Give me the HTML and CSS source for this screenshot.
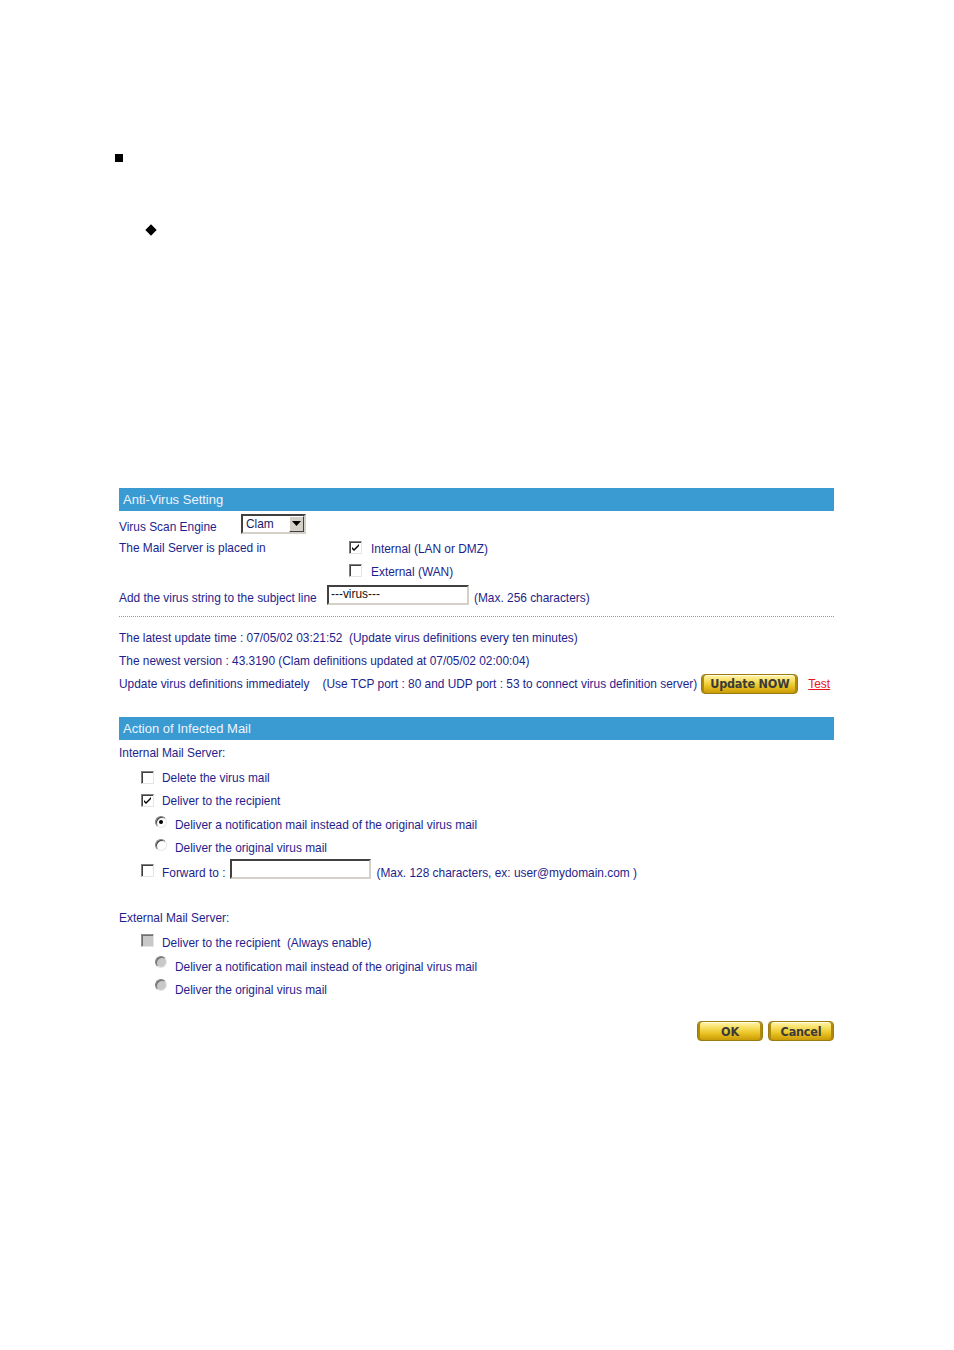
FILE: index.html
```html
<!DOCTYPE html>
<html>
<head>
<meta charset="utf-8">
<link rel="stylesheet" href="styles.css">
</head>
<body>
<div class="page">
  <div class="bullet-sq"></div>
  <div class="bullet-dm"></div>

  <div class="panel">
    <div class="bar">Anti-Virus Setting</div>

    <div class="row h25">
      <span class="lbl w122 dn">Virus Scan Engine</span>
      <span class="select"><span class="sel-val">Clam</span><span class="sel-btn"><svg width="9" height="5" viewBox="0 0 9 5"><path d="M0 0H9L4.5 5Z" fill="#000"/></svg></span></span>
    </div>
    <div class="row h23">
      <span class="lbl w230">The Mail Server is placed in</span>
      <span class="cb"><svg class="chk" width="9" height="9" viewBox="0 0 9 9"><path d="M1 4l2 2 5-5v2l-5 5-2-2z" fill="#000"/></svg></span>
      <span class="opt">Internal (LAN or DMZ)</span>
    </div>
    <div class="row h23">
      <span class="lbl w230"></span>
      <span class="cb"></span>
      <span class="opt">External (WAN)</span>
    </div>
    <div class="row h26">
      <span class="lbl w208 dn">Add the virus string to the subject line</span>
      <span class="input w142">---virus---</span>
      <span class="note dn">(Max. 256 characters)</span>
    </div>

    <div class="dots"></div>

    <div class="row h23 first-info">
      <span>The latest update time : 07/05/02 03:21:52&nbsp; (Update virus definitions every ten minutes)</span>
    </div>
    <div class="row h23">
      <span>The newest version : 43.3190 (Clam definitions updated at 07/05/02 02:00:04)</span>
    </div>
    <div class="row h23">
      <span>Update virus definitions immediately&nbsp;&nbsp;&nbsp; (Use TCP port : 80 and UDP port : 53 to connect virus definition server)</span>
      <span class="gbtn upd">Update NOW</span>
      <a class="test" href="#">Test</a>
    </div>

    <div class="bar bar2">Action of Infected Mail</div>

    <div class="row h26">
      <span>Internal Mail Server:</span>
    </div>
    <div class="row h23 ind1">
      <span class="cb"></span>
      <span class="opt2">Delete the virus mail</span>
    </div>
    <div class="row h23 ind1">
      <span class="cb"><svg class="chk" width="9" height="9" viewBox="0 0 9 9"><path d="M1 4l2 2 5-5v2l-5 5-2-2z" fill="#000"/></svg></span>
      <span class="opt2">Deliver to the recipient</span>
    </div>
    <div class="row h23 ind2">
      <span class="rd on"></span>
      <span class="opt3">Deliver a notification mail instead of the original virus mail</span>
    </div>
    <div class="row h23 ind2">
      <span class="rd"></span>
      <span class="opt3">Deliver the original virus mail</span>
    </div>
    <div class="row h25 ind1">
      <span class="cb"></span>
      <span class="opt2 dn2">Forward to :</span>
      <span class="input w141 fwd"></span>
      <span class="note dn2">(Max. 128 characters, ex: user@mydomain.com )</span>
    </div>

    <div class="row h23 ext">
      <span>External Mail Server:</span>
    </div>
    <div class="row h23 ind1">
      <span class="cb dis"></span>
      <span class="opt2 dn2">Deliver to the recipient&nbsp; (Always enable)</span>
    </div>
    <div class="row h23 ind2">
      <span class="rd dis"></span>
      <span class="opt3 dn2">Deliver a notification mail instead of the original virus mail</span>
    </div>
    <div class="row h23 ind2">
      <span class="rd dis"></span>
      <span class="opt3 dn2">Deliver the original virus mail</span>
    </div>

    <div class="actions">
      <span class="gbtn ok">OK</span>
      <span class="gbtn cancel">Cancel</span>
    </div>
  </div>
</div>
</body>
</html>
```

FILE: styles.css
```css
html, body {
  margin: 0;
  padding: 0;
  background: #fff;
}
.page {
  padding-top: 154px;
  font-family: "Liberation Sans", Arial, sans-serif;
  font-size: 11.9px;
  color: #1e1e8c;
}
.bullet-sq {
  width: 8px;
  height: 8px;
  background: #000;
  margin-left: 115px;
}
.bullet-dm {
  width: 8px;
  height: 8px;
  background: #000;
  transform: rotate(45deg);
  margin-left: 147px;
  margin-top: 64px;
}
.panel {
  width: 715px;
  margin-left: 119px;
  margin-top: 254px;
}
.bar {
  height: 23px;
  line-height: 23px;
  background: #3a9ad2;
  color: #eef4ff;
  font-size: 13px;
  padding-left: 4px;
}
.bar2 {
  margin-top: 22px;
}
.row {
  display: flex;
  align-items: center;
  white-space: nowrap;
}
.h23 { height: 23px; }
.h25 { height: 25px; }
.h26 { height: 26px; }
.lbl { display: inline-block; }
.w122 { width: 122px; }
.w230 { width: 230px; }
.w208 { width: 208px; }
.dn { padding-top: 6px; }
.dn2 { padding-top: 4px; }

.select {
  display: inline-flex;
  align-items: stretch;
  width: 65px;
  height: 20px;
  box-sizing: border-box;
  border: 2px solid;
  border-color: #404040 #d4d0c8 #d4d0c8 #404040;
  background: #fff;
}
.sel-val {
  flex: 1;
  line-height: 16px;
  padding-left: 3px;
  color: #1a1a66;
}
.sel-btn {
  width: 15px;
  background: #d4d0c8;
  border: 1px solid;
  border-color: #fff #404040 #404040 #fff;
  box-sizing: border-box;
  display: flex;
  align-items: center;
  justify-content: center;
}

.cb {
  position: relative;
  display: inline-block;
  width: 11px;
  height: 11px;
  border: 1px solid;
  border-color: #808080 #e4e4e4 #e4e4e4 #808080;
  box-shadow: inset 1px 1px 0 #404040;
  background: #fff;
  flex: none;
}
.cb.dis {
  background: #c8c8c8;
  border-color: #909090 #e4e4e4 #e4e4e4 #909090;
  box-shadow: inset 1px 1px 0 #707070;
}
.chk {
  position: absolute;
  left: 1px;
  top: 1px;
}
.opt { margin-left: 9px; margin-top: 3px; }
.opt2 { margin-left: 8px; margin-top: 1px; }
.opt3 { margin-left: 8px; margin-top: 2px; }

.rd {
  position: relative;
  display: inline-block;
  width: 10px;
  height: 10px;
  border-radius: 50%;
  border: 1px solid;
  border-color: #808080 #e8e8e8 #e8e8e8 #808080;
  box-shadow: inset 1px 1px 0 #404040;
  background: #fff;
  flex: none;
  margin-top: -3px;
}
.rd.on::after {
  content: "";
  position: absolute;
  left: 3px;
  top: 3px;
  width: 4px;
  height: 4px;
  border-radius: 50%;
  background: #000;
}
.rd.dis {
  background: #c8c8c8;
  box-shadow: inset 1px 1px 0 #707070;
}

.input {
  display: inline-block;
  height: 20px;
  box-sizing: border-box;
  border: 2px solid;
  border-color: #404040 #d4d0c8 #d4d0c8 #404040;
  background: #fff;
  line-height: 14px;
  padding-left: 2px;
  color: #111;
  flex: none;
}
.w142 { width: 142px; }
.w141 { width: 141px; }
.fwd { margin-left: 5px; margin-top: -4px; }
.note { margin-left: 5px; }

.dots {
  margin-top: 8px;
  height: 1px;
  background-image: linear-gradient(to right, #2cc4d4 50%, transparent 50%);
  background-size: 2px 1px;
}
.first-info { margin-top: 9px; }

.gbtn {
  display: inline-flex;
  align-items: center;
  justify-content: center;
  height: 20px;
  box-sizing: border-box;
  border: 1px solid #9b7c10;
  border-radius: 4px;
  background: linear-gradient(#fff6b0 0%, #f6dc58 35%, #e8c020 65%, #c99b08 100%);
  box-shadow: inset 2px 0 0 #b08a10, inset -2px 0 0 #b08a10, inset 0 1px 0 #fffbe0;
  font-family: "DejaVu Sans Condensed", sans-serif;
  font-weight: bold;
  font-size: 12.5px;
  letter-spacing: -0.2px;
  color: #3a3a3a;
}
.upd {
  width: 97px;
  margin-left: 4px;
}
.test {
  margin-left: 10px;
  color: #e8141c;
  text-decoration: underline;
}

.ind1 { padding-left: 22px; }
.ind2 { padding-left: 36px; }
.ext { margin-top: 23px; }

.actions {
  display: flex;
  justify-content: flex-end;
  gap: 5px;
  margin-top: 23px;
}
.ok { width: 66px; }
.cancel { width: 66px; }
```
